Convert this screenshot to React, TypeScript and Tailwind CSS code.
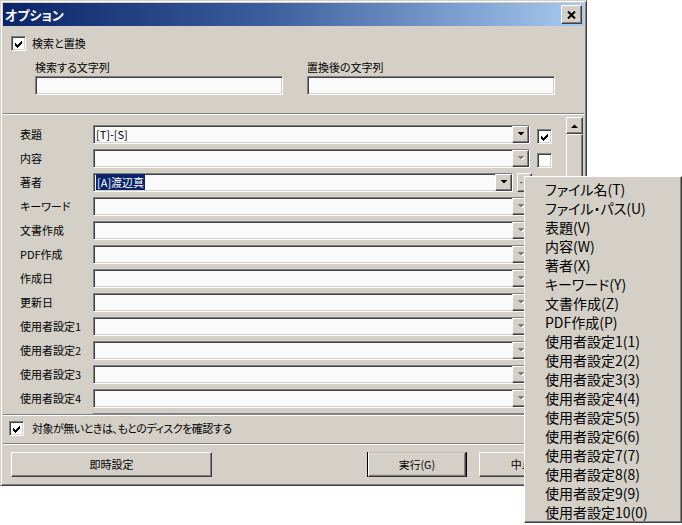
import React from "react"

const raised =
  "border border-t-white border-l-white border-r-[#404040] border-b-[#404040] shadow-[inset_-1px_-1px_0_#808080,inset_1px_1px_0_#d4d0c8]"
const sunken =
  "border border-t-[#808080] border-l-[#808080] border-r-white border-b-white shadow-[inset_1px_1px_0_#404040,inset_-1px_-1px_0_#d4d0c8]"
const etched = "h-[2px] border-t border-b border-t-[#808080] border-b-white"

// the last row is scrolled almost out of view, only its top edge shows
const fields = [
  "表題",
  "内容",
  "著者",
  "キーワード",
  "文書作成",
  "PDF作成",
  "作成日",
  "更新日",
  "使用者設定1",
  "使用者設定2",
  "使用者設定3",
  "使用者設定4",
  "",
]

const menuItems = [
  "ファイル名(T)",
  "ファイル・パス(U)",
  "表題(V)",
  "内容(W)",
  "著者(X)",
  "キーワード(Y)",
  "文書作成(Z)",
  "PDF作成(P)",
  "使用者設定1(1)",
  "使用者設定2(2)",
  "使用者設定3(3)",
  "使用者設定4(4)",
  "使用者設定5(5)",
  "使用者設定6(6)",
  "使用者設定7(7)",
  "使用者設定8(8)",
  "使用者設定9(9)",
  "使用者設定10(0)",
]

function Check({ checked }: { checked?: boolean }) {
  return (
    <div className={`w-[15px] h-[15px] shrink-0 bg-white flex items-center justify-center ${sunken}`}>
      {checked && (
        <svg width="9" height="8" viewBox="0 0 9 8" shapeRendering="crispEdges">
          <path d="M1 3h1v1h1v1h1v-1h1v-1h1v-1h1v-1h1v3h-1v1h-1v1h-1v1h-1v1h-1v-1h-1v-1h-1z" fill="black" />
        </svg>
      )}
    </div>
  )
}

function Arrow({ disabled }: { disabled?: boolean }) {
  return (
    <svg width="8" height="5" viewBox="0 0 8 5" shapeRendering="crispEdges">
      {disabled && <path d="M1 1h7L4.5 4.5z" fill="white" />}
      <path d="M0 0h7L3.5 3.5z" fill={disabled ? "#808080" : "black"} />
    </svg>
  )
}

function Combo({ value, selected, disabled, narrow }: { value?: string; selected?: boolean; disabled?: boolean; narrow?: boolean }) {
  return (
    <div className={`${narrow ? "w-[420px]" : "w-[437px]"} h-[19px] bg-[#fafafa] flex items-center ${sunken}`}>
      <div className="flex-1 pl-[2px] text-[11px] leading-[13px] text-black">
        {selected ? <span className="bg-[#0a246a] text-white px-[1px]">{value}</span> : value}
      </div>
      <div className={`w-[17px] h-full flex items-center justify-center bg-[#d4d0c8] ${raised}`}>
        <Arrow disabled={disabled} />
      </div>
    </div>
  )
}

function Button({ label, def, className }: { label: string; def?: boolean; className: string }) {
  return (
    <div className={`${className} h-[25px] ${def ? "outline outline-1 outline-black -outline-offset-1" : ""}`}>
      <div className={`w-full h-full flex items-center justify-center text-[11px] text-black ${raised} ${def ? "scale-[0.98]" : ""}`}>
        {label}
      </div>
    </div>
  )
}

export default function App() {
  return (
    <div className="w-[682px] h-[525px] bg-white relative overflow-hidden font-['Noto_Sans_CJK_JP',sans-serif] [font-feature-settings:'palt']">
      <div className="w-[587px] h-[486px] bg-[#d4d0c8] p-[2px] flex flex-col border border-t-[#d4d0c8] border-l-[#d4d0c8] border-r-[#404040] border-b-[#404040] shadow-[inset_1px_1px_0_white,inset_-1px_-1px_0_#808080]">
        <div className="h-[23px] shrink-0 flex items-center pl-[2px] pr-[2px] bg-[linear-gradient(90deg,#0a246a,#3a5e9c_45%,#a6caf0)]">
          <span className="text-white font-bold text-[13px] leading-none">オプション</span>
          <div className={`ml-auto w-[21px] h-[19px] bg-[#d4d0c8] flex items-center justify-center ${raised}`}>
            <svg width="9" height="8" viewBox="0 0 9 8">
              <path d="M1 0.5l7 7M8 0.5l-7 7" stroke="black" strokeWidth="2" />
            </svg>
          </div>
        </div>

        <div className="pt-[10px] pl-[8px] shrink-0">
          <div className="h-[15px] flex items-center gap-[6px]">
            <Check checked />
            <span className="text-[11px] leading-[13px] text-black">検索と置換</span>
          </div>
          <div className="mt-[10px] pl-[24px] flex gap-[24px]">
            <div className="w-[248px]">
              <div className="h-[13px] text-[11px] leading-[13px] text-black">検索する文字列</div>
              <div className={`mt-[2px] h-[19px] bg-[#fafafa] ${sunken}`} />
            </div>
            <div className="w-[248px]">
              <div className="h-[13px] text-[11px] leading-[13px] text-black">置換後の文字列</div>
              <div className={`mt-[2px] h-[19px] bg-[#fafafa] ${sunken}`} />
            </div>
          </div>
        </div>

        <div className={`mt-[18px] shrink-0 ${etched}`} />

        <div className="h-[299px] shrink-0 flex overflow-hidden">
          <div className="flex-1 pt-[10px] pl-[17px] flex flex-col gap-[5px]">
            {fields.map((f, i) => (
              <div key={i} className="flex items-center h-[19px] shrink-0">
                <div className="w-[73px] text-[11px] leading-[13px] text-black">{f}</div>
                {i === 2 ? (
                  <>
                    <Combo value="[A]渡辺真" selected narrow />
                    <div className={`ml-[4px] w-[15px] h-[19px] flex items-center justify-center text-[10px] ${raised}`}>…</div>
                    <div className="ml-[5px] self-end">
                      <Check />
                    </div>
                  </>
                ) : (
                  <>
                    <Combo value={i === 0 ? "[T]-[S]" : ""} disabled={i !== 0} />
                    <div className="ml-[7px] self-end">
                      <Check checked={i === 0} />
                    </div>
                  </>
                )}
              </div>
            ))}
          </div>
          <div className="w-[17px] mr-[1px] mt-[2px] flex flex-col">
            <div className={`h-[17px] flex items-center justify-center ${raised}`}>
              <svg width="7" height="4" viewBox="0 0 7 4">
                <path d="M0 4h7L3.5 0.5z" fill="black" />
              </svg>
            </div>
            <div className={`h-[150px] ${raised}`} />
            <div className="flex-1 bg-[#e8e6e2]" />
          </div>
        </div>

        <div className={`shrink-0 ${etched}`} />

        <div className="mt-[5px] pl-[6px] h-[15px] shrink-0 flex items-center gap-[8px]">
          <Check checked />
          <span className="text-[11px] leading-[13px] tracking-[-0.5px] text-black whitespace-nowrap">
            対象が無いときは、もとのディスクを確認する
          </span>
        </div>

        <div className={`mt-[7px] shrink-0 ${etched}`} />

        <div className="mt-[7px] pl-[8px] flex shrink-0">
          <Button label="即時設定" className="w-[201px]" />
          <Button label="実行(G)" def className="ml-[155px] w-[100px]" />
          <Button label="中止(C)" className="ml-[12px] w-[100px]" />
        </div>
      </div>

      <div className={`absolute left-[524px] top-[176px] w-[158px] h-[347px] bg-[#d4d0c8] pt-[2px] ${raised}`}>
        {menuItems.map((m) => (
          <div key={m} className="h-[19px] pl-[20px] flex items-center text-[14px] leading-none text-black">
            {m}
          </div>
        ))}
      </div>
    </div>
  )
}
